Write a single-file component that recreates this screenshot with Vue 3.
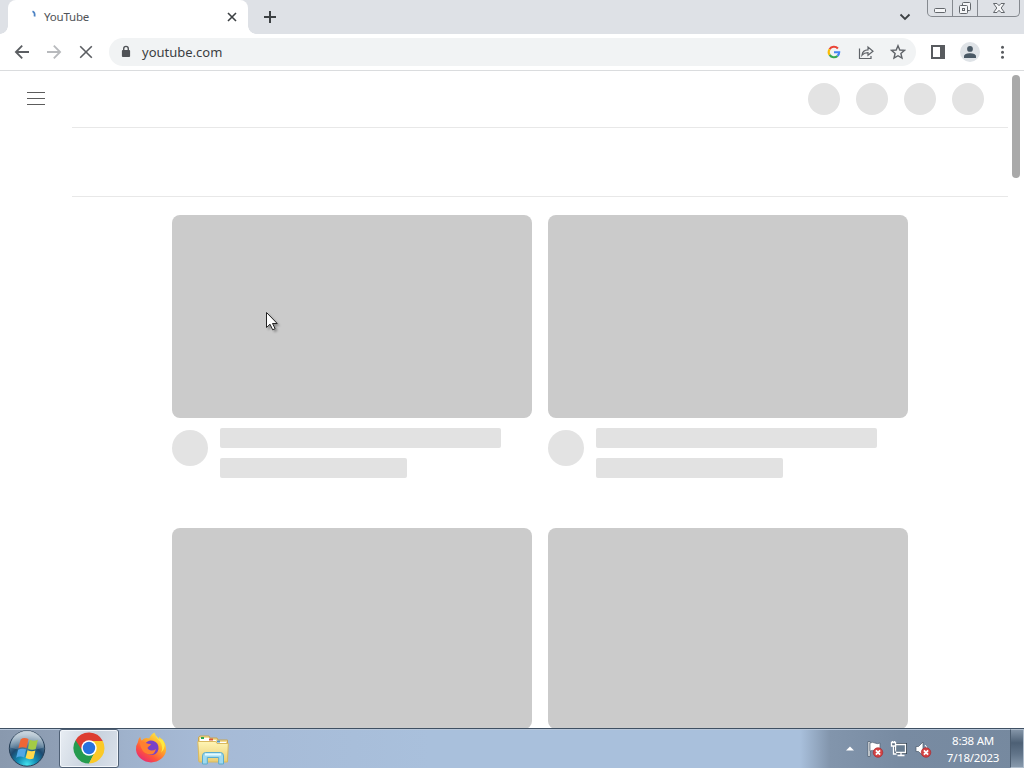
<template>
  <div class="desktop">
    <header class="tab-strip">
      <div class="tab">
        <svg class="spinner" width="16" height="16" viewBox="0 0 16 16">
          <path d="M7.500 3.200Q10.300 4.500 9.500 8.500" />
        </svg>
        <span class="tab-title">YouTube</span>
        <svg class="tab-close" width="16" height="16" viewBox="0 0 16 16">
          <path d="M4 4l8 8M12 4l-8 8" />
        </svg>
      </div>
      <svg class="new-tab" width="16" height="16" viewBox="0 0 16 16">
        <path d="M8 2v12M2 8h12" />
      </svg>
      <svg class="tab-search" width="16" height="16" viewBox="0 0 16 16">
        <path d="M3.500 6.500l4.500 4.500L12.500 6.500" />
      </svg>
      <div class="window-buttons">
        <span class="win-btn min">
          <svg width="14" height="14" viewBox="0 0 14 14">
            <rect x="1.500" y="7.500" width="11" height="4" rx="1" />
          </svg>
        </span>
        <span class="win-btn max">
          <svg width="14" height="14" viewBox="0 0 14 14">
            <rect x="4.500" y="1.500" width="8" height="8" rx="1" />
            <rect x="1.500" y="4.500" width="8" height="8" rx="1" />
            <rect x="4.500" y="7.500" width="2" height="2" />
          </svg>
        </span>
        <span class="win-btn close">
          <svg width="14" height="14" viewBox="0 0 14 14">
            <path d="M1.500 2.500h3.500l2 2.200 2-2.200h3.500L9.200 7l3.300 4.500H9L7 9.300l-2 2.200H1.500L4.800 7z" />
          </svg>
        </span>
      </div>
    </header>

    <div class="toolbar">
      <div class="nav-buttons">
        <svg width="16" height="16" viewBox="0 0 16 16"><path d="M15 8H2M8.200 1.700L1.900 8l6.300 6.300" /></svg>
        <svg class="disabled" width="16" height="16" viewBox="0 0 16 16"><path d="M1 8h13M7.800 1.700L14.100 8l-6.300 6.300" /></svg>
        <svg class="stop" width="16" height="16" viewBox="0 0 16 16"><path d="M2.200 2.200l11.600 11.600M13.800 2.200L2.200 13.800" /></svg>
      </div>
      <div class="omnibox">
        <svg class="lock" width="10" height="14" viewBox="0 0 10 14">
          <rect x=".9" y="5" width="8.200" height="7" rx="1" />
          <path d="M2.700 5.500V3.700a2.300 2.300 0 0 1 4.600 0v1.800" />
        </svg>
        <span class="url">youtube.com</span>
        <svg class="google" width="16" height="16" viewBox="0 0 16 16">
          <path d="M3.550 5.200A5.200 5.200 0 0 1 11.900 4.500" stroke="#ea4335" />
          <path d="M3.550 5.200A5.200 5.200 0 0 0 3.600 10.900" stroke="#fbbc05" />
          <path d="M3.600 10.900A5.200 5.200 0 0 0 11.500 11.900" stroke="#34a853" />
          <path d="M11.500 11.900A5.200 5.200 0 0 0 13.200 8.200H8" stroke="#4285f4" />
        </svg>
        <svg class="line-icon" width="16" height="16" viewBox="0 0 16 16">
          <path d="M1.500 4.500v10h11.500v-2.500" />
          <path d="M4 11.200c.4-3.400 2.600-5.200 6-5.300V3l5 4.200-5 4.100V8.700c-2.700 0-4.500.7-6 2.500z" />
        </svg>
        <svg class="line-icon star" width="16" height="16" viewBox="0 0 16 16">
          <path d="M8 1.700l1.800 4.300 4.700.4-3.600 3.100 1.100 4.600L8 11.700l-4 2.400 1.100-4.600-3.600-3.100 4.700-.4z" />
        </svg>
      </div>
      <div class="toolbar-actions">
        <svg width="16" height="16" viewBox="0 0 16 16">
          <path fill="#585b5f" fill-rule="evenodd" d="M1 1h14v14H1zM3 3v10h7V3z" />
        </svg>
        <span class="profile">
          <svg width="14" height="14" viewBox="0 0 14 14">
            <circle cx="7" cy="3.900" r="2.900" />
            <path d="M1 13v-1.700C1 9 4.500 8.200 7 8.200s6 .8 6 3.100V13z" />
          </svg>
        </span>
        <svg width="16" height="16" viewBox="0 0 16 16" fill="#585b5f">
          <circle cx="8.500" cy="3.300" r="1.500" /><circle cx="8.500" cy="8.300" r="1.500" /><circle cx="8.500" cy="13.300" r="1.500" />
        </svg>
      </div>
    </div>

    <main class="page">
      <div class="masthead">
        <div class="guide-button"><i></i><i></i><i></i></div>
        <div class="masthead-icons">
          <span v-for="n in 4" :key="n" class="masthead-icon"></span>
        </div>
      </div>
      <div class="chip-bar"></div>
      <div class="grid">
        <article v-for="n in 4" :key="n" class="video">
          <div class="thumbnail"></div>
          <div class="details">
            <span class="channel"></span>
            <div class="lines">
              <span class="line title"></span>
              <span class="line meta"></span>
            </div>
          </div>
        </article>
      </div>
      <div class="scrollbar"></div>
    </main>

    <footer class="taskbar">
      <svg class="start" width="40" height="40" viewBox="0 0 40 40">
        <defs>
          <radialGradient id="orb" cx=".5" cy=".96" r=".85">
            <stop offset="0" stop-color="#43e3ee" />
            <stop offset=".32" stop-color="#138db5" />
            <stop offset=".62" stop-color="#1c4a70" />
            <stop offset="1" stop-color="#7392aa" />
          </radialGradient>
          <linearGradient id="gloss" x2="0" y2="1">
            <stop offset="0" stop-color="#fff" stop-opacity=".65" />
            <stop offset="1" stop-color="#fff" stop-opacity=".12" />
          </linearGradient>
        </defs>
        <circle cx="20" cy="19.500" r="17.700" fill="url(#orb)" stroke="#263e56" />
        <path d="M3.200 18.500a16.800 16.800 0 0 1 33.600 0Q20 24.500 3.200 18.500z" fill="url(#gloss)" />
        <g transform="translate(-1.500 -1.500) scale(1.080)">
          <path d="M14 11q3-2.500 7.300-.3L19.500 19q-4-1.700-7.600.2z" fill="#ee6636" />
          <path d="M22.500 11.300q4 2 7.400.1L28 19.800q-3.500 1.600-7.200-.4z" fill="#a3cb45" />
          <path d="M11.600 20.700q3.800-2 7.500-.3l-1.800 7.400q-3.900-1.800-7.400.2z" fill="#51a7e5" />
          <path d="M20.400 21q3.700 1.800 7.300.3l-1.800 7.300q-3.700 1.600-7.300-.3z" fill="#ffd84a" />
        </g>
      </svg>
      <div class="task active">
        <svg width="32" height="32" viewBox="0 0 32 32">
          <path d="M16 16L2.570 8.250A15.500 15.500 0 0 0 16 31.500L22.100 20z" fill="#259b4e" />
          <path d="M16 9h13.800A15.500 15.500 0 0 1 16 31.500l6-12z" fill="#fbc927" />
          <path d="M2.570 8.250A15.500 15.500 0 0 1 29.800 9H16l-6.100 10.500z" fill="#dd3d31" />
          <circle cx="16" cy="16" r="7.700" fill="#fff" />
          <circle cx="16" cy="16" r="6.200" fill="#2872df" />
        </svg>
      </div>
      <div class="task firefox">
        <svg width="32" height="32" viewBox="0 0 32 32">
          <defs>
            <linearGradient id="fox" x1=".85" y1=".05" x2=".2" y2=".95">
              <stop offset="0" stop-color="#fff04a" />
              <stop offset=".4" stop-color="#ffa52a" />
              <stop offset=".72" stop-color="#ff553b" />
              <stop offset="1" stop-color="#e72a74" />
            </linearGradient>
          </defs>
          <path d="M3 10q.3-3.500 2.200-5.300.2 2.600 1.500 3.700 2-2.100 4.500-2.400 2.300.1 3 .5Q16 2 19.500.5q.4 3.600 4.500 6.500.2-1.300 0-2.200 7.200 5 7.200 13.200A15.200 14 0 0 1 1 18q-.3-4.600 2-8z" fill="url(#fox)" />
          <path d="M10 12q3-4.700 8-3.300 6 1.800 5.500 8.300-1.200 6-7.500 6-5.600-.4-6.500-5.700l4.500-2.600z" fill="#7941c8" />
          <path d="M4.500 10q3-1.600 6.500 1.100 2 1.100 5 1-.3 2-3.600 2.700 0 3.200 3.600 3.700 3 .3 4.800-1.500-.8 6-7 5.500Q6.500 21.700 4.500 10z" fill="#ff8030" />
          <path d="M20 1q.7 4.800 5 8.500 3.700 4.700 1.200 11.200 6.300-6.700 1.300-13.200-2 .4-3.700-.6Q21 5 20 1z" fill="#ffe83e" />
        </svg>
      </div>
      <div class="task explorer">
        <svg width="32" height="30" viewBox="0 0 32 30">
          <defs>
            <linearGradient id="folder" x2="0" y2="1">
              <stop offset="0" stop-color="#fff5b5" />
              <stop offset="1" stop-color="#e9cd72" />
            </linearGradient>
          </defs>
          <path d="M1.500 7V2.200L3 1h9l1 2h7l1 2h9.500v21H2z" fill="#f5dd90" stroke="#c9a553" />
          <path d="M3 3h10v2h6v2h10v2H3z" fill="#fff" />
          <path d="M4 2h3v2H4z" fill="#2ca652" />
          <path d="M12 3.500h4v2h-4z" fill="#db5637" />
          <path d="M20 5.500h3v2h-3z" fill="#5197c5" />
          <path d="M.8 6.500h18L20 8.500h11.300L30.500 27H2z" fill="url(#folder)" stroke="#dab95f" />
          <path d="M5.500 29v-8q0-3.500 3-3.500h15q3 0 3 3.500v8h-4.800v-6.500H10.300V29z" fill="#9fdaef" stroke="#5baccd" />
          <path d="M8 19.500h16" stroke="#e3faff" stroke-width="2" />
        </svg>
      </div>
      <div class="tray">
        <svg class="tray-arrow" width="8" height="5" viewBox="0 0 8 5"><path d="M0 4.500l4-4 4 4z" fill="#fff" /></svg>
        <svg class="flag" width="18" height="18" viewBox="0 0 18 18">
          <path d="M2 1.500h2v15H2z" fill="#fff" stroke="#485666" stroke-width=".7" />
          <path d="M4 3q2.500-1.300 5 0t5 0v8q-2.500 1.200-5 0t-5 0z" fill="#fff" stroke="#526173" stroke-width=".7" />
          <circle cx="12" cy="12.500" r="4.800" fill="#d34343" stroke="#a62128" stroke-width=".6" />
          <path d="M9.900 10.400l4.200 4.200m0-4.200l-4.200 4.200" stroke="#fff" stroke-width="1.800" />
        </svg>
        <svg width="18" height="18" viewBox="0 0 18 18">
          <path d="M5.500 4.500h10v8h-10z" fill="#66798e" stroke="#334251" stroke-width="3" />
          <path d="M5.500 4.500h10v8h-10zM11 12.500V15M7.500 15.500h7" fill="#687c90" stroke="#fff" stroke-width="1.300" />
          <path d="M1.500 2.500v3.500h4V2.500zM2.500 1v2M4.500 1v2M3.500 6v8h3" fill="#607184" stroke="#fff" stroke-width="1.300" />
        </svg>
        <svg class="volume" width="18" height="18" viewBox="0 0 18 18">
          <path d="M2 6.500h2.500L9 2v14l-4.500-4.500H2z" fill="#fff" stroke="#4b596a" stroke-width=".7" />
          <path d="M11 5q2 2 2 4" fill="none" stroke="#fff" />
          <circle cx="12" cy="12.500" r="4.800" fill="#d34343" stroke="#a62128" stroke-width=".6" />
          <path d="M9.900 10.400l4.200 4.200m0-4.200l-4.200 4.200" stroke="#fff" stroke-width="1.800" />
        </svg>
        <div class="clock">
          <span class="time">8:38 AM</span>
          <span class="date">7/18/2023</span>
        </div>
        <div class="show-desktop"></div>
      </div>
    </footer>

    <svg class="cursor" width="15" height="22" viewBox="0 0 15 22">
      <path d="M1.500 1.500v15l3.500-3.300 2.700 5.600 2.400-1.200-2.600-5.100h4.700z" />
    </svg>
  </div>
</template>

<script setup>
</script>

<style>
html,
body {
  margin: 0;
  overflow: hidden;
}
</style>

<style scoped>
.desktop {
  position: relative;
  display: flex;
  flex-direction: column;
  width: 1024px;
  height: 768px;
  overflow: hidden;
  background: #fff;
  font-family: "Noto Sans", "Open Sans", sans-serif;
}

svg {
  display: block;
  flex: none;
}

/* browser frame */
.tab-strip {
  display: flex;
  box-sizing: border-box;
  height: 34px;
  padding-left: 8px;
  background: #dee1e6;
}

.tab {
  position: relative;
  display: flex;
  align-items: center;
  box-sizing: border-box;
  width: 240px;
  height: 34px;
  padding: 0 8px 0 17px;
  border-radius: 8px 8px 0 0;
  background: #fff;
}

.tab::before,
.tab::after {
  content: "";
  position: absolute;
  bottom: 0;
  width: 8px;
  height: 8px;
}

.tab::before {
  left: -8px;
  background: radial-gradient(circle at 0 0, transparent 7.5px, #fff 8px);
}

.tab::after {
  right: -8px;
  background: radial-gradient(circle at 100% 0, transparent 7.5px, #fff 8px);
}

.spinner {
  margin-top: -2px;
  fill: none;
  stroke: #4d83c4;
  stroke-width: 1.8;
}

.tab-title {
  flex: 1;
  margin: -1px 0 0 3px;
  color: #505357;
  font-size: 11.5px;
  letter-spacing: -0.2px;
}

.tab-close,
.new-tab,
.tab-search {
  fill: none;
  stroke: #3c4043;
  stroke-width: 1.6;
}

.new-tab {
  margin: 9px 0 0 14px;
  stroke-width: 2;
}

.tab-search {
  margin: 8px 14px 0 auto;
  stroke-width: 1.8;
}

.window-buttons {
  display: flex;
  box-sizing: border-box;
  width: 93px;
  height: 17px;
  margin-right: 4px;
  border: 1px solid #85898f;
  border-top: 0;
  border-radius: 0 0 5px 5px;
}

.win-btn {
  display: flex;
  justify-content: center;
  align-items: center;
  width: 24px;
  border-right: 1px solid #85898f;
}

.win-btn.close {
  flex: 1;
  border: 0;
}

.win-btn svg {
  fill: #f5f6f8;
  stroke: #63676c;
  stroke-width: 1;
}

.toolbar {
  display: flex;
  align-items: center;
  box-sizing: border-box;
  height: 37px;
  padding: 0 14px;
  border-bottom: 1px solid #dadcde;
}

.nav-buttons {
  display: flex;
  gap: 16px;
  width: 95px;
}

.nav-buttons svg {
  fill: none;
  stroke: #5b5e62;
  stroke-width: 1.8;
}

.nav-buttons .disabled {
  stroke: #b8babd;
}

.nav-buttons .stop {
  stroke-width: 1.6;
}

.omnibox {
  display: flex;
  align-items: center;
  box-sizing: border-box;
  width: 807px;
  height: 28px;
  padding: 0 10px 0 12px;
  border-radius: 14px;
  background: #f1f3f4;
}

.lock {
  fill: #505357;
}

.lock path {
  fill: none;
  stroke: #505357;
  stroke-width: 1.4;
}

.url {
  flex: 1;
  margin-left: 11px;
  color: #3b3e42;
  font-size: 13px;
}

.google {
  fill: none;
  stroke-width: 2.1;
}

.line-icon {
  margin-left: 16px;
  fill: none;
  stroke: #5f6368;
  stroke-width: 1.2;
}

.star {
  stroke-width: 1.4;
}

.toolbar-actions {
  display: flex;
  align-items: center;
  gap: 14px;
  margin-left: 14px;
}

.profile {
  display: flex;
  justify-content: center;
  align-items: center;
  width: 20px;
  height: 20px;
  border-radius: 50%;
  background: #dfe3e7;
  fill: #4a5965;
}

/* page skeleton */
.page {
  position: relative;
  height: 657px;
  overflow: hidden;
}

.masthead {
  display: flex;
  justify-content: space-between;
  align-items: center;
  height: 56px;
  padding: 0 40px 0 27px;
}

.guide-button {
  display: flex;
  flex-direction: column;
  gap: 5px;
  width: 18px;
  padding-bottom: 1px;
}

.guide-button i {
  height: 1px;
  background: #5c5c5c;
}

.masthead-icons {
  display: flex;
  gap: 16px;
}

.masthead-icon {
  width: 32px;
  height: 32px;
  border-radius: 50%;
  background: #e3e3e3;
}

.chip-bar {
  height: 68px;
  margin: 0 16px 0 72px;
  border-top: 1px solid #e8e8e8;
  border-bottom: 1px solid #e8e8e8;
}

.grid {
  display: grid;
  grid-template-columns: 360px 360px;
  gap: 50px 16px;
  margin: 18px 0 0 172px;
}

.thumbnail {
  height: 203px;
  border-radius: 8px;
  background: #cbcbcb;
}

.video:nth-child(n + 3) .thumbnail {
  height: 201px;
}

.details {
  display: flex;
  gap: 12px;
  height: 50px;
  margin-top: 10px;
}

.channel {
  width: 36px;
  height: 36px;
  margin-top: 2px;
  border-radius: 50%;
  background: #e3e3e3;
}

.lines {
  display: flex;
  flex-direction: column;
  gap: 10px;
}

.line {
  height: 20px;
  border-radius: 2px;
  background: #e2e2e2;
}

.title {
  width: 281px;
}

.meta {
  width: 187px;
}

.scrollbar {
  position: absolute;
  top: 4px;
  right: 4px;
  width: 8px;
  height: 103px;
  border-radius: 4px;
  background: #a9a9a9;
}

/* windows taskbar */
.taskbar {
  display: flex;
  box-sizing: border-box;
  height: 40px;
  padding-left: 7px;
  border-top: 1px solid #3f5063;
  box-shadow: inset 0 1px #b7c7db;
  background: linear-gradient(90deg, #8999ae 0, #8f9fb5 58px, #9fb2cc 125px, #a6bad6 200px, #a9c0dc 430px, #a9c0dc 800px, #8295ac 830px, #788ba2 900px, #76899f 1024px);
}

.start {
  margin-right: 12px;
}

.task {
  display: flex;
  justify-content: center;
  align-items: center;
  box-sizing: border-box;
  width: 60px;
  height: 39px;
  margin-right: 2px;
}

.task.firefox svg {
  margin-bottom: 2px;
}

.task.explorer svg {
  margin-top: 2px;
}

.task.active {
  border: 1px solid #4f6075;
  border-radius: 3px;
  box-shadow: inset 0 0 0 1px #f2f6fb;
  background: linear-gradient(110deg, #e8edf3, #c8d2de 55%, #dbe2eb);
}

.task.active svg {
  margin-bottom: 2px;
}

.tray {
  display: flex;
  align-items: center;
  margin-left: auto;
}

.tray-arrow {
  margin-right: 12px;
}

.flag,
.flag + svg {
  margin-right: 6px;
}

.clock {
  display: flex;
  flex-direction: column;
  align-items: center;
  box-sizing: border-box;
  width: 78px;
  padding: 1px 0 0 4px;
  color: #fff;
  font-size: 11.5px;
  line-height: 17px;
  letter-spacing: -0.25px;
}

.show-desktop {
  box-sizing: border-box;
  width: 14px;
  height: 39px;
  border: 1px solid #afbdcc;
  border-left-color: #4c5d70;
  background: linear-gradient(#8394a7, #4d6075 35%, #617489 65%, #8799ac);
}

.cursor {
  position: absolute;
  top: 311px;
  left: 265px;
  fill: #fff;
  stroke: #222;
  filter: drop-shadow(2px 2px 1px rgba(0, 0, 0, 0.3));
}
</style>
